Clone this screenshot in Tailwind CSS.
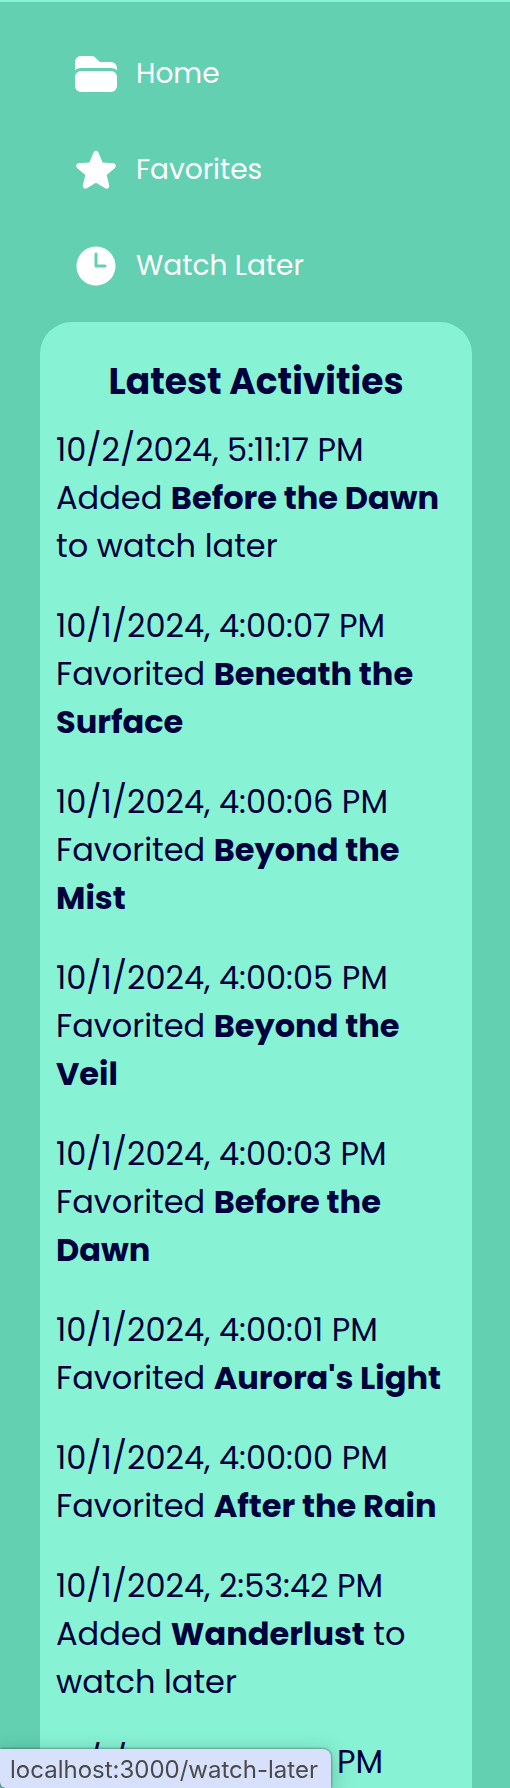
<!DOCTYPE html>
<html lang="en">
<head>
<meta charset="utf-8">
<meta name="viewport" content="width=device-width, initial-scale=1">
<title>Watch Later</title>
<script src="https://cdn.jsdelivr.net/npm/@tailwindcss/browser@4"></script>
</head>
<body class="bg-[#63d0b2] font-[Poppins,Inter,sans-serif] text-[#00003c]">
<div class="h-screen overflow-hidden border-t-2 border-[#88f2d5] px-10 pt-6">
  <nav aria-label="Main" class="px-8 text-[28px] font-normal text-white">
    <a href="#home" class="flex h-24 items-center gap-4">
      <svg class="size-12" viewBox="0 0 24 24" fill="currentColor" aria-hidden="true"><path d="M19.5 21a3 3 0 0 0 3-3v-4.5a3 3 0 0 0-3-3h-15a3 3 0 0 0-3 3V18a3 3 0 0 0 3 3h15ZM1.5 10.146V6a3 3 0 0 1 3-3h5.379a2.25 2.25 0 0 1 1.59.659l2.122 2.121c.14.141.331.22.53.22H19.5a3 3 0 0 1 3 3v1.146A4.483 4.483 0 0 0 19.5 9h-15a4.483 4.483 0 0 0-3 1.146Z"/></svg>
      <span>Home</span>
    </a>
    <a href="#favorites" class="flex h-24 items-center gap-4">
      <svg class="size-12" viewBox="0 0 24 24" fill="currentColor" aria-hidden="true"><path d="M10.788 3.21c.448-1.077 1.976-1.077 2.424 0l2.082 5.006 5.404.434c1.164.093 1.636 1.545.749 2.305l-4.117 3.527 1.257 5.273c.271 1.136-.964 2.033-1.96 1.425L12 18.354 7.373 21.18c-.996.608-2.231-.29-1.96-1.425l1.257-5.273-4.117-3.527c-.887-.76-.415-2.212.749-2.305l5.404-.434 2.082-5.005Z"/></svg>
      <span>Favorites</span>
    </a>
    <a href="#watch-later" class="flex h-24 items-center gap-4">
      <svg class="size-12" viewBox="0 0 24 24" fill="currentColor" fill-rule="evenodd" aria-hidden="true"><path d="M12 2.25c-5.385 0-9.75 4.365-9.75 9.75s4.365 9.75 9.75 9.75 9.75-4.365 9.75-9.75S17.385 2.25 12 2.25ZM12.75 6a.75.75 0 0 0-1.5 0v6c0 .414.336.75.75.75h4.5a.75.75 0 0 0 0-1.5h-3.75V6Z"/></svg>
      <span>Watch Later</span>
    </a>
  </nav>
  <section class="mt-2 -mr-0.5 rounded-[32px] bg-[#88f2d5] px-4 pt-8 pb-16">
    <h2 class="mb-4 text-center text-[36px] leading-14 font-bold">Latest Activities</h2>
    <ul class="flex flex-col gap-8 text-[32px] leading-12 font-normal">
      <li><p>10/2/2024, 5:11:17 PM</p><p>Added <strong class="font-bold">Before the Dawn</strong> to watch later</p></li>
      <li><p>10/1/2024, 4:00:07 PM</p><p>Favorited <strong class="font-bold">Beneath the Surface</strong></p></li>
      <li><p>10/1/2024, 4:00:06 PM</p><p>Favorited <strong class="font-bold">Beyond the Mist</strong></p></li>
      <li><p>10/1/2024, 4:00:05 PM</p><p>Favorited <strong class="font-bold">Beyond the Veil</strong></p></li>
      <li><p>10/1/2024, 4:00:03 PM</p><p>Favorited <strong class="font-bold">Before the Dawn</strong></p></li>
      <li><p>10/1/2024, 4:00:01 PM</p><p>Favorited <strong class="font-bold">Aurora's Light</strong></p></li>
      <li><p>10/1/2024, 4:00:00 PM</p><p>Favorited <strong class="font-bold">After the Rain</strong></p></li>
      <li><p>10/1/2024, 2:53:42 PM</p><p>Added <strong class="font-bold">Wanderlust</strong> to watch later</p></li>
      <li><p>10/1/2024, 2:53:42 PM</p></li>
    </ul>
  </section>
</div>
<div role="status" class="fixed bottom-0 left-0 rounded-tr-lg rounded-bl-md bg-[#d7e1fb] pt-0.5 pr-[13px] pl-[10px] font-[Inter,sans-serif] text-[24px] leading-[37px] text-[#4a4a4a] shadow-[0_0_3px_rgba(0,0,0,0.6),0_6px_24px_rgba(0,0,0,0.25)]">localhost:3000/watch-later</div>
</body>
</html>
